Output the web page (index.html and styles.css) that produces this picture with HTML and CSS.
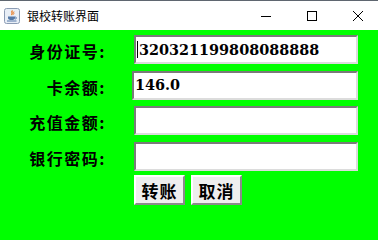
FILE: index.html
```html
<!DOCTYPE html>
<html lang="zh-CN">
<head>
<meta charset="utf-8">
<title>银校转账界面</title>
<link rel="stylesheet" href="styles.css">
</head>
<body>
<div class="window">
  <div class="titlebar">
    <svg class="app-icon" width="16" height="16" viewBox="0 0 16 16">
      <rect x="0.5" y="0.5" width="15" height="15" rx="2" fill="#e8eef6" stroke="#8c9cb4"/>
      <path d="M8.5 2.5 C6.5 4 9.5 5 7.5 7" stroke="#e8781e" stroke-width="1.3" fill="none"/>
      <path d="M10 3.5 C9 4.5 10.5 5.5 9.5 6.5" stroke="#e8781e" stroke-width="1" fill="none"/>
      <path d="M4 8.5 H11 V10 C11 11.5 9.5 12 7.5 12 C5.5 12 4 11.5 4 10 Z" fill="#5479a8"/>
      <path d="M11 9 C13 9 13 11 11 11" stroke="#5479a8" stroke-width="1" fill="none"/>
      <path d="M3 13 H12.5" stroke="#5479a8" stroke-width="1"/>
    </svg>
    <span class="title">银校转账界面</span>
    <div class="controls">
      <svg width="10" height="10" viewBox="0 0 10 10"><path d="M0 5.5 H10" stroke="#000" stroke-width="1"/></svg>
      <svg width="10" height="10" viewBox="0 0 10 10"><rect x="0.5" y="0.5" width="9" height="9" fill="none" stroke="#000" stroke-width="1"/></svg>
      <svg width="10" height="10" viewBox="0 0 10 10"><path d="M0 0 L10 10 M10 0 L0 10" stroke="#000" stroke-width="1"/></svg>
    </div>
  </div>
  <div class="content">
    <div class="form">
      <label class="label">身份证号:</label>
      <div class="field"><span class="caret"></span><span class="value">320321199808088888</span></div>
      <label class="label">卡余额:</label>
      <div class="field field-shift"><span class="value">146.0</span></div>
      <label class="label">充值金额:</label>
      <div class="field"></div>
      <label class="label">银行密码:</label>
      <div class="field"></div>
      <div class="buttons">
        <button class="btn">转账</button>
        <button class="btn">取消</button>
      </div>
    </div>
  </div>
</div>
</body>
</html>
```
FILE: styles.css
```css
html, body {
  margin: 0;
  padding: 0;
}
body {
  width: 378px;
  height: 240px;
  overflow: hidden;
  background: #00ff00;
}
.window {
  width: 378px;
  height: 240px;
  display: flex;
  flex-direction: column;
}
.titlebar {
  height: 29px;
  border-top: 1px solid #5f6670;
  background: #ffffff;
  display: flex;
  align-items: center;
  font-family: "Noto Sans CJK SC", "Noto Sans", sans-serif;
}
.app-icon {
  margin-left: 4px;
  margin-top: 1px;
  flex: none;
}
.title {
  margin-left: 7px;
  font-size: 12px;
  color: #000;
  line-height: 1;
}
.controls {
  margin-left: auto;
  margin-right: 15px;
  display: flex;
  gap: 36px;
  align-items: center;
  margin-top: 1px;
}
.content {
  flex: 1;
  background: #00ff00;
  padding-top: 5px;
}
.form {
  display: grid;
  grid-template-columns: 105px 224px;
  grid-auto-rows: 29px;
  column-gap: 29px;
  row-gap: 6.5px;
}
.label {
  justify-self: end;
  align-self: center;
  padding-top: 3px;
  font-family: "Noto Sans CJK SC", sans-serif;
  font-weight: 700;
  font-size: 16px;
  letter-spacing: 1.5px;
  margin-right: -1px;
  color: #000;
  line-height: 1;
}
.field {
  box-sizing: border-box;
  height: 29px;
  background: #ffffff;
  border-style: solid;
  border-width: 2px 2px 2px 2px;
  border-color: #7a7a7a #dcdcdc #dcdcdc #7a7a7a;
  display: flex;
  align-items: center;
  padding-left: 1px;
  font-family: "DejaVu Serif", serif;
  font-weight: 700;
  font-size: 14.4px;
  color: #000;
}
.field-shift {
  margin-left: -2px;
}
.caret {
  width: 1px;
  height: 17px;
  background: #000;
  margin-right: 1px;
}
.value {
  line-height: 1;
  padding-top: 1px;
}
.buttons {
  grid-column: 2;
  display: flex;
  gap: 6px;
  margin-top: -2px;
}
.btn {
  box-sizing: border-box;
  width: 51px;
  height: 30px;
  padding: 0;
  background: #eeeeee;
  border-style: solid;
  border-width: 2px;
  border-color: #ffffff #8a8a8a #8a8a8a #ffffff;
  font-family: "Noto Sans CJK SC", sans-serif;
  font-weight: 700;
  font-size: 17px;
  letter-spacing: 1px;
  color: #000;
  line-height: 1;
}
```
